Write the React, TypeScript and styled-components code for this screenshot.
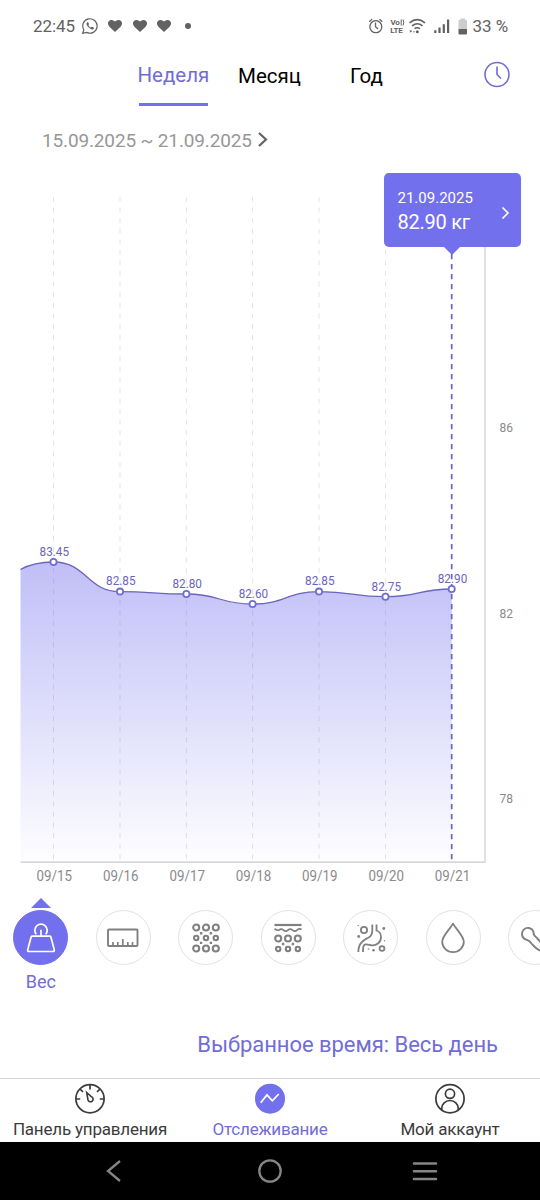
import React from 'react'
import styled, { createGlobalStyle } from 'styled-components'

const colors = {
  primary: '#7370ee',
  link: '#716dd6',
  line: '#6b66bd',
  muted: '#979797',
  axis: '#8b8b8b',
  icon: '#808080',
  status: '#626262',
  dark: '#3b3b3b',
}

const GlobalStyle = createGlobalStyle`
  * {
    box-sizing: border-box;
  }
  body {
    margin: 0;
    background: #fff;
    font-family: Roboto, 'Liberation Sans', sans-serif;
  }
  svg {
    display: block;
    flex: none;
  }
  button {
    margin: 0;
    padding: 0;
    border: 0;
    background: none;
    font: inherit;
  }
`

const Screen = styled.div`
  display: flex;
  flex-direction: column;
  width: 540px;
  height: 1200px;
  overflow: hidden;
  background: #fff;
`

const StatusBar = styled.header`
  display: flex;
  justify-content: space-between;
  height: 50px;
  padding: 1px 32px 0 33px;
  color: ${colors.status};
  font-size: 17px;
`

const StatusGroup = styled.div`
  display: flex;
  align-items: center;
`

const Clock = styled.span`
  width: 49px;
  letter-spacing: -0.1px;
`

const Battery = styled.span`
  margin-left: 6px;
  padding-top: 1px;
  letter-spacing: -0.1px;
`

const TabBar = styled.nav`
  display: flex;
  height: 60px;
  padding: 0 30px 0 137.5px;
`

const Tab = styled.button<{ $active?: boolean; $width: number }>`
  display: flex;
  flex-direction: column;
  justify-content: space-between;
  width: ${({ $width }) => $width}px;
  height: 56px;
  padding-top: ${({ $active }) => ($active ? 13 : 14)}px;
  color: ${({ $active }) => ($active ? colors.link : '#000')};
  font-size: 20.5px;
  line-height: 24px;
  text-align: left;
  white-space: nowrap;

  &::after {
    content: '';
    width: 69px;
    height: 3px;
    margin-left: 1.5px;
    background: ${({ $active }) => ($active ? colors.primary : 'transparent')};
  }
`

const HistoryButton = styled.button`
  display: flex;
  height: 27px;
  margin: 11px 0 0 auto;
`

const Period = styled.div`
  display: flex;
  align-items: center;
  height: 60px;
  padding-left: 42px;
  gap: 5px;
  color: ${colors.muted};
  font-size: 19px;
  letter-spacing: -0.15px;
`

const ChartArea = styled.section`
  position: relative;
  height: 720px;
`

const Tooltip = styled.div`
  position: absolute;
  top: 3px;
  left: 383.5px;
  display: flex;
  align-items: center;
  justify-content: space-between;
  width: 137.5px;
  height: 73.5px;
  padding: 2px 11px 0 14px;
  border-radius: 5px;
  background: ${colors.primary};
  color: #fff;

  &::after {
    content: '';
    position: absolute;
    top: 73px;
    left: 59px;
    border: solid transparent;
    border-width: 9px 9px 0;
    border-top-color: ${colors.primary};
  }
`

const TooltipDate = styled.div`
  font-size: 15px;
  line-height: 22px;
`

const TooltipValue = styled.div`
  font-size: 20px;
  line-height: 26px;
  letter-spacing: -0.25px;
`

const TooltipArrow = styled.svg`
  margin-top: 5px;
`

const Metrics = styled.div`
  display: flex;
  gap: 27.5px;
  height: 110px;
  padding: 7.5px 0 0 13.4px;
  overflow: hidden;
`

const Metric = styled.div`
  display: flex;
  flex: none;
  flex-direction: column;
  align-items: center;
  width: 55px;
`

const Pointer = styled.span<{ $active?: boolean }>`
  height: 10px;
  margin-bottom: 2.5px;
  border: solid transparent;
  border-width: 0 10px 10px;
  border-bottom-color: ${({ $active }) => ($active ? colors.primary : 'transparent')};
`

const MetricCircle = styled.span<{ $active?: boolean }>`
  display: flex;
  align-items: center;
  justify-content: center;
  width: 55px;
  height: 55px;
  border: 1px solid ${({ $active }) => ($active ? colors.primary : '#e2e2e2')};
  border-radius: 50%;
  background: ${({ $active }) => ($active ? colors.primary : '#fff')};
  color: ${({ $active }) => ($active ? '#fff' : colors.icon)};
`

const MetricLabel = styled.span`
  margin-top: 6px;
  color: ${colors.link};
  font-size: 18px;
  line-height: 22px;
`

const SelectedTime = styled.div`
  display: flex;
  align-items: center;
  justify-content: flex-end;
  height: 78px;
  padding: 10px 42px 0 0;
  color: ${colors.link};
  font-size: 22px;
  letter-spacing: -0.04px;
`

const BottomNav = styled.nav`
  display: grid;
  grid-template-columns: repeat(3, 1fr);
  height: 64px;
  border-top: 1px solid #d6d6d6;
`

const NavItem = styled.button<{ $active?: boolean }>`
  display: flex;
  flex-direction: column;
  align-items: center;
  gap: 3px;
  padding-top: 4px;
  color: ${({ $active }) => ($active ? colors.link : colors.dark)};
  font-size: 17px;
  letter-spacing: -0.2px;
  line-height: 22px;
  white-space: nowrap;
`

const SystemBar = styled.footer`
  display: flex;
  align-items: center;
  justify-content: space-between;
  height: 58px;
  padding: 0 102px 0 100px;
  background: #000;
`

const points = [
  { x: 53.5, y: 392, value: '83.45', date: '09/15' },
  { x: 120, y: 421.6, value: '82.85', date: '09/16' },
  { x: 186.4, y: 424, value: '82.80', date: '09/17' },
  { x: 252.6, y: 434, value: '82.60', date: '09/18' },
  { x: 319, y: 421.6, value: '82.85', date: '09/19' },
  { x: 385.5, y: 426.7, value: '82.75', date: '09/20' },
  { x: 451.7, y: 419, value: '82.90', date: '09/21' },
]

const ticks = [
  { y: 257, label: '86' },
  { y: 443, label: '82' },
  { y: 628.5, label: '78' },
]

const curve = points.slice(1).reduce((path, point, i) => {
  const prev = points[i]
  const mid = (prev.x + point.x) / 2
  return `${path} C${mid} ${prev.y} ${mid} ${point.y} ${point.x} ${point.y}`
}, 'M20.5 399.5 Q34 392 53.5 392')

const WeightChart = () => (
  <svg width="540" height="720" viewBox="0 0 540 720">
    <defs>
      <linearGradient id="fill" x1="0" y1="392" x2="0" y2="692" gradientUnits="userSpaceOnUse">
        <stop offset="0" stopColor="#7370ee" stopOpacity="0.45" />
        <stop offset="1" stopColor="#7370ee" stopOpacity="0.01" />
      </linearGradient>
    </defs>
    <path d={`${curve} V692 H20.5 Z`} fill="url(#fill)" />
    {points.slice(0, -1).map(({ x }) => (
      <path key={x} d={`M${x} 27 V692`} stroke="#777" strokeOpacity="0.2" strokeDasharray="5 5.6" />
    ))}
    <path d="M20.5 692.2 H485" stroke="#c9c9c9" strokeWidth="1.3" />
    <path d="M485 27 V692.8" stroke="#d6d6d6" strokeWidth="1.5" />
    <path d={curve} fill="none" stroke={colors.line} strokeWidth="1.3" />
    <path d="M451.7 84 V692" stroke={colors.line} strokeWidth="1.7" strokeDasharray="5.3 4.7" />
    {points.map(({ x, y, value, date }) => (
      <g key={date} textAnchor="middle">
        <circle cx={x} cy={y} r="3.1" fill="#fff" stroke={colors.link} strokeWidth="1.8" />
        <text x={x + 0.8} y={y - 6.2} fontSize="13" fill={colors.line} textLength="29.5" lengthAdjust="spacingAndGlyphs">{value}</text>
        <text x={x + 0.8} y="710.8" fontSize="14" fill={colors.axis} textLength="35.5" lengthAdjust="spacingAndGlyphs">{date}</text>
      </g>
    ))}
    {ticks.map(({ y, label }) => (
      <text key={label} x="499.5" y={y + 4.8} fontSize="13" fill={colors.axis} textLength="13.5" lengthAdjust="spacingAndGlyphs">{label}</text>
    ))}
  </svg>
)

const WhatsAppIcon = () => (
  <svg width="16" height="16" viewBox="0 0 16 16" fill="none" stroke="currentColor">
    <path d="M.7 15.3 1.8 11.7A7.2 7.2 0 1 1 4.7 14.4Z" strokeWidth="1.2" />
    <path d="M5.4 4.3c-1.5.8-.8 2.9.6 4.5s3.6 3 4.9 2.6 1.2-1.8.4-2.1l-1.3-.6c-.6-.2-.8.9-1.4.7C7.5 8.9 6.6 7.9 6.5 7.2c0-.4.6-.7.5-1.1l-.7-1.6c-.2-.3-.5-.4-.9-.2Z" fill="currentColor" stroke="none" />
  </svg>
)

const HeartIcon = () => (
  <svg width="14" height="12" viewBox="0 0 14 12">
    <path d="M7 12 1.4 6.7C-.4 5-.4 2.3.9 1 2.6-.6 5.4-.2 7 1.6 8.6-.2 11.4-.6 13.1 1c1.3 1.3 1.3 4-.5 5.7Z" fill="currentColor" />
  </svg>
)

const Hearts = styled.div`
  display: flex;
  gap: 10.5px;
  margin: 0 14px 0 10px;
`

const Dot = styled.span`
  width: 6px;
  height: 6px;
  border-radius: 50%;
  background: currentColor;
`

const StatusIcons = () => (
  <svg width="99" height="18" viewBox="368 16 99 18" fill="none" stroke="currentColor">
    <g strokeWidth="1.3">
      <circle cx="375.8" cy="25.7" r="6" />
      <path d="M375.5 21.5V25.7L378 28M369.2 20.8 372 18.3M382.3 20.8 379.5 18.3" />
    </g>
    <text fill="currentColor" stroke="none" fontSize="8" fontWeight="700" letterSpacing="-0.2">
      <tspan x="390.5" y="24.3">Vo</tspan>
      <tspan x="390.2" y="32.1">LTE</tspan>
    </text>
    <path d="M401.2 18.5V24.5M403 18.5Q404.5 21.5 403 24.5" strokeWidth="1" />
    <path d="M409.5 21.8Q417.3 15.5 425 21.8M412 24.8Q417.3 20.6 422.5 24.8M414.5 27.7Q417.3 25.7 420 27.7" strokeWidth="1.6" />
    <g fill="currentColor" stroke="none">
      <circle cx="417.3" cy="30.7" r="1.5" />
      <path d="M409.3 29.5h3l-1.5 2.3ZM414 29.7l1 1.6h-2Z" />
      <path d="M434.2 29.3h2.2v2.7h-2.2ZM438.4 26.5h2.2V32h-2.2ZM442.7 23.3h2.2V32h-2.2ZM447 18.5h2.2V32H447Z" />
      <path d="M458.5 19h2v-1.5h4.5V19h2v9h-8.5Z" opacity=".32" />
      <path d="M458.5 28H467v4.5q0 1-1 1h-6.5q-1 0-1-1Z" />
    </g>
  </svg>
)

const WeightIcon = () => (
  <svg width="30" height="31" viewBox="0 0 30 31" fill="none" stroke="currentColor" strokeWidth="1.7" strokeLinejoin="round">
    <path d="M10.3 12.3A6.2 6.2 0 1 1 19.7 12.3" />
    <path d="M15 7.8V14" />
    <path d="M6.4 14.2H23.6Q24.6 14.2 24.9 15L28.2 27.5Q28.7 29.5 27 29.5H3Q1.3 29.5 1.8 27.5L5.1 15Q5.4 14.2 6.4 14.2Z" />
  </svg>
)

const RulerIcon = () => (
  <svg width="32" height="20" viewBox="0 0 32 20" fill="none" stroke="currentColor" strokeWidth="1.9">
    <rect x="1" y="1.5" width="29.5" height="16.5" rx="1" />
    <path d="M6 14V18M10.8 14V18M15.8 11V18M20.8 14V18M25.5 14V18" strokeWidth="1.7" />
  </svg>
)

const CellsIcon = () => (
  <svg width="28" height="30" viewBox="0 0 28 30" fill="none" stroke="currentColor" strokeWidth="2.1">
    {[4.2, 14, 23.8].map(x => (
      <g key={x}>
        <circle cx={x} cy="4.5" r="3" />
        <circle cx={x} cy="15" r="2.2" />
        <circle cx={x} cy="25.5" r="3" />
      </g>
    ))}
    <path d="M9.1 9V11.4M18.9 9V11.4M9.1 18.7V21.1M18.9 18.7V21.1" strokeWidth="2.4" />
  </svg>
)

const SkinIcon = () => (
  <svg width="28" height="30" viewBox="0 0 28 30" fill="none" stroke="currentColor" strokeWidth="2.1">
    <path d="M.5 2H27.5" strokeWidth="2.2" />
    <path d="M.5 5.8Q3 7.6 5 7.2Q7.2 5.2 9.5 7.2T14 7.2T18.5 7.2T23 7.2Q25.5 5.2 27.5 6.5" strokeWidth="1.7" />
    {[4.2, 14, 23.8].map(x => (
      <g key={x}>
        <circle cx={x} cy="15.5" r="3" />
        <circle cx={x} cy="26" r="2.2" />
      </g>
    ))}
    <path d="M9.1 19.8V22.2M18.9 19.8V22.2" strokeWidth="2.4" />
  </svg>
)

// The duodenum and oesophagus leave the drawing open at both ends
const StomachIcon = () => (
  <svg width="30" height="30" viewBox="0 0 30 30" fill="none" stroke="currentColor" strokeWidth="1.8">
    <path d="M16.3 1.5V8C16.3 14.5 11 14.5 6.5 18.5Q2.3 22 2.3 29" />
    <path d="M20.5 1.5V7.5C23 8.2 25 11 25 14C25 19.5 20 23 15.5 22.3C11.5 21.5 7.8 20 7.3 24Q7 26 7 29" />
    <circle cx="8" cy="7" r="3.1" />
    <circle cx="26" cy="25.5" r="2.4" />
    <g fill="currentColor" stroke="none">
      <circle cx="2.2" cy="2.5" r=".7" />
      <circle cx="2.7" cy="13.5" r="1.4" />
      <circle cx="27.8" cy="5.5" r="1.4" />
      <circle cx="28.5" cy="17.7" r=".7" />
      <circle cx="12.5" cy="26" r=".8" />
      <circle cx="17.5" cy="27.3" r="1.3" />
    </g>
  </svg>
)

const DropIcon = () => (
  <svg width="24" height="32" viewBox="0 0 24 32" fill="none" stroke="currentColor" strokeWidth="1.8" strokeLinejoin="round">
    <path d="M12 1.6C15 7.2 22.8 13.8 22.8 19.8A10.8 10.4 0 0 1 1.2 19.8C1.2 13.8 9 7.2 12 1.6Z" />
  </svg>
)

const BoneIcon = () => (
  <svg width="30" height="30" viewBox="0 0 30 30" fill="none" stroke="currentColor" strokeWidth="1.9" strokeLinejoin="round">
    <path d="M21 28C16 27.5 13.5 24 10.5 20.5C8.5 17.5 7 17.5 4.500 16.400A6 6 0 1 1 12.500 8.600C12 11.600 13 13 16 15L19.500 19Q20.500 21 20.200 22" />
    <path d="M20.5 2V4.5" strokeWidth="1.3" />
  </svg>
)

const metrics = [
  { icon: <WeightIcon />, label: 'Вес' },
  { icon: <RulerIcon /> },
  { icon: <CellsIcon /> },
  { icon: <SkinIcon /> },
  { icon: <StomachIcon /> },
  { icon: <DropIcon /> },
  { icon: <BoneIcon /> },
]

const GaugeIcon = () => (
  <svg width="32" height="32" viewBox="0 0 32 32" fill="none" stroke="currentColor" strokeWidth="1.7">
    <circle cx="16" cy="15.7" r="14.1" />
    <path d="M16 2V6.5M6.2 6.2 9 9M25.8 6.2 23 9M2 16H6.2M25.8 16H30" />
    <path d="M12.7 9.5 17.5 13.8A2.6 2.6 0 1 1 14 17Z" strokeWidth="1.6" />
  </svg>
)

const TrendIcon = () => (
  <svg width="32" height="32" viewBox="0 0 32 32" fill="none">
    <circle cx="16" cy="15.7" r="15" fill={colors.primary} />
    <path d="M6.7 19.7 13 12 18.3 17.8 24.8 11" stroke="#fff" strokeWidth="1.8" />
  </svg>
)

const AccountIcon = () => (
  <svg width="32" height="32" viewBox="0 0 32 32" fill="none" stroke="currentColor" strokeWidth="1.7">
    <circle cx="16" cy="15.7" r="14.1" />
    <circle cx="16" cy="10.8" r="4.6" />
    <path d="M7.7 27V25.500A8.300 8 0 0 1 24.300 25.500V27" />
  </svg>
)

const App = () => (
  <>
    <GlobalStyle />
    <Screen>
      <StatusBar>
        <StatusGroup>
          <Clock>22:45</Clock>
          <WhatsAppIcon />
          <Hearts>
            <HeartIcon />
            <HeartIcon />
            <HeartIcon />
          </Hearts>
          <Dot />
        </StatusGroup>
        <StatusGroup>
          <StatusIcons />
          <Battery>33 %</Battery>
        </StatusGroup>
      </StatusBar>
      <TabBar>
        <Tab $active $width={100.5}>Неделя</Tab>
        <Tab $width={112}>Месяц</Tab>
        <Tab $width={70}>Год</Tab>
        <HistoryButton aria-label="История">
          <svg width="26" height="27" viewBox="0 0 26 27" fill="none" stroke={colors.link} strokeWidth="1.6">
            <circle cx="13" cy="13.5" r="12" />
            <path d="M13 5.5V13.5L17 17.5" />
          </svg>
        </HistoryButton>
      </TabBar>
      <Period>
        <span>15.09.2025 ~ 21.09.2025</span>
        <svg width="12" height="16" viewBox="0 0 12 16" fill="none" stroke="#626262" strokeWidth="2.2">
          <path d="M2 1 9 7.5 2 14" />
        </svg>
      </Period>
      <ChartArea>
        <WeightChart />
        <Tooltip>
          <div>
            <TooltipDate>21.09.2025</TooltipDate>
            <TooltipValue>82.90 кг</TooltipValue>
          </div>
          <TooltipArrow width="9" height="14" viewBox="0 0 9 14" fill="none" stroke="#fff" strokeWidth="1.7">
            <path d="M1.5 1.5 7 7 1.5 12.5" />
          </TooltipArrow>
        </Tooltip>
      </ChartArea>
      <Metrics>
        {metrics.map(({ icon, label }, i) => (
          <Metric key={i}>
            <Pointer $active={i === 0} />
            <MetricCircle $active={i === 0}>{icon}</MetricCircle>
            {label && <MetricLabel>{label}</MetricLabel>}
          </Metric>
        ))}
      </Metrics>
      <SelectedTime>Выбранное время: Весь день</SelectedTime>
      <BottomNav>
        <NavItem>
          <GaugeIcon />
          Панель управления
        </NavItem>
        <NavItem $active>
          <TrendIcon />
          Отслеживание
        </NavItem>
        <NavItem>
          <AccountIcon />
          Мой аккаунт
        </NavItem>
      </BottomNav>
      <SystemBar>
        <svg width="28" height="28" viewBox="0 0 28 28" fill="none" stroke="#858585" strokeWidth="2.3">
          <path d="M20 4 8 14 20 24" />
        </svg>
        <svg width="28" height="28" viewBox="0 0 28 28" fill="none" stroke="#858585" strokeWidth="2.3">
          <circle cx="14" cy="14" r="10.7" />
        </svg>
        <svg width="26" height="28" viewBox="0 0 26 28" fill="none" stroke="#858585" strokeWidth="2.6" strokeLinecap="round">
          <path d="M2 6.5H24M2 14.2H24M2 22H24" />
        </svg>
      </SystemBar>
    </Screen>
  </>
)

export default App
